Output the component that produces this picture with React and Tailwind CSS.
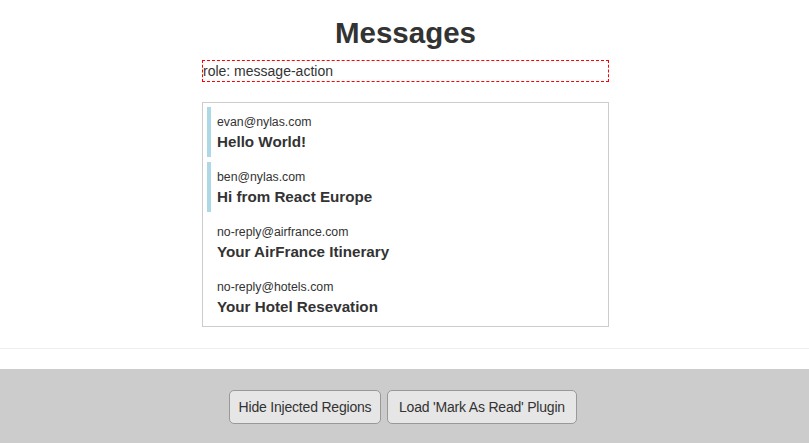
export default function App() {
  const messages = [
    { from: 'evan@nylas.com', subject: 'Hello World!', unread: true },
    { from: 'ben@nylas.com', subject: 'Hi from React Europe', unread: true },
    { from: 'no-reply@airfrance.com', subject: 'Your AirFrance Itinerary', unread: false },
    { from: 'no-reply@hotels.com', subject: 'Your Hotel Resevation', unread: false },
  ];

  return (
    <div className="min-h-[443px] bg-white text-[#333] font-['Liberation_Sans',Arial,sans-serif]">
      <div className="ml-[202px] w-[407px] pt-[13px]">
        <h1 className="text-center text-[29.5px] font-bold leading-[40px]">Messages</h1>
        <div className="mt-[7px] h-[22px] border border-dashed border-[#f00] text-[14px] leading-[20px]">
          role: message-action
        </div>
        <div className="mt-[20px] flex flex-col gap-[5px] border border-[#ccc] p-[4px]">
          {messages.map((m) => (
            <div
              key={m.from}
              className={`h-[50px] border-l-4 pl-[6px] pt-[7px] ${m.unread ? 'border-[#add8e6]' : 'border-transparent'}`}
            >
              <div className="text-[12.3px] leading-[16px]">{m.from}</div>
              <div className="mt-[3px] text-[15.2px] font-bold leading-[18px]">{m.subject}</div>
            </div>
          ))}
        </div>
      </div>
      <div className="mt-[21px] border-t border-[#eee]" />
      <div className="mt-[20px] flex h-[74px] items-start justify-center gap-[6px] bg-[#ccc] pr-[3px] pt-[21px]">
        <button className="h-[34px] w-[152px] rounded-[5px] border border-[#999] bg-[#e6e6e6] text-[14px] tracking-[-0.2px] text-[#333]">
          Hide Injected Regions
        </button>
        <button className="h-[34px] w-[190px] rounded-[5px] border border-[#999] bg-[#e6e6e6] text-[14px] tracking-[-0.2px] text-[#333]">
          Load 'Mark As Read' Plugin
        </button>
      </div>
    </div>
  );
}
